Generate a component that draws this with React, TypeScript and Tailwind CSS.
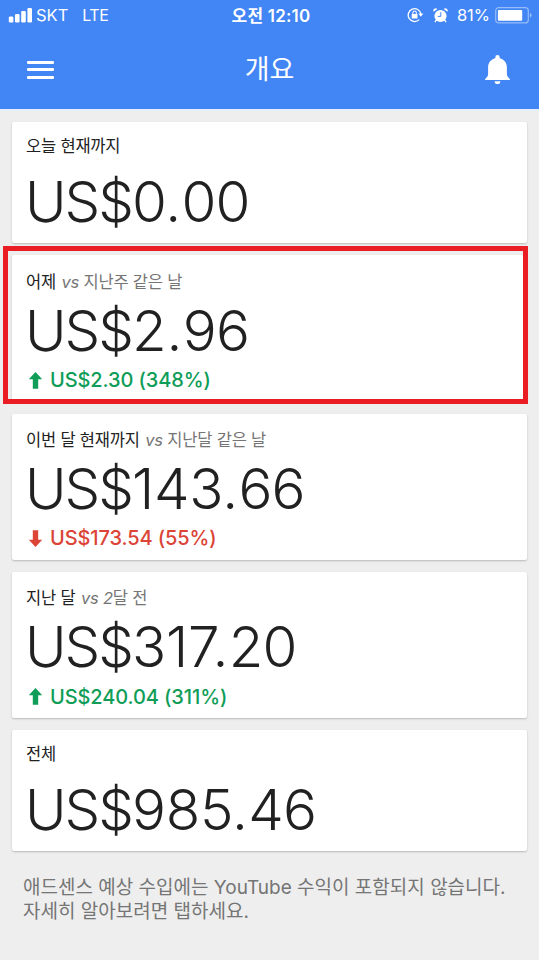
import React from 'react';
import { clsx } from 'clsx';

interface Earning {
  id: string;
  label: string;
  compare?: React.ReactNode;
  whole: string;
  cents: string;
  delta?: { direction: 'up' | 'down'; text: string };
  highlighted?: boolean;
}

const EARNINGS: Earning[] = [
  { id: 'today', label: '오늘 현재까지', whole: '0', cents: '00' },
  {
    id: 'yesterday',
    label: '어제',
    compare: '지난주 같은 날',
    whole: '2',
    cents: '96',
    delta: { direction: 'up', text: 'US$2.30 (348%)' },
    highlighted: true,
  },
  {
    id: 'month',
    label: '이번 달 현재까지',
    compare: '지난달 같은 날',
    whole: '143',
    cents: '66',
    delta: { direction: 'down', text: 'US$173.54 (55%)' },
  },
  {
    id: 'last-month',
    label: '지난 달',
    compare: (
      <>
        <i>2</i>달 전
      </>
    ),
    whole: '317',
    cents: '20',
    delta: { direction: 'up', text: 'US$240.04 (311%)' },
  },
  { id: 'total', label: '전체', whole: '985', cents: '46' },
];

const SignalBars = () => (
  <svg className="h-[15px] w-6" viewBox="0 0 24 15" fill="currentColor">
    <rect x="0.8" y="8.5" width="4.6" height="6" rx="1.3" />
    <rect x="7" y="6" width="4.6" height="8.5" rx="1.3" />
    <rect x="13.2" y="3" width="4.6" height="11.5" rx="1.3" />
    <rect x="19.4" y="0" width="4.6" height="14.5" rx="1.3" />
  </svg>
);

const RotationLock = () => (
  <svg className="h-4 w-[17px]" viewBox="0 0 17 16" fill="none" stroke="currentColor" strokeWidth="1.3">
    <path d="M12.2 12.6A6.4 6.4 0 1 1 13.9 7" />
    <path d="M11.3 6.6h5l-2.5 3.2z" fill="currentColor" stroke="none" />
    <rect x="4.7" y="7" width="5.8" height="4.6" rx="0.5" fill="currentColor" stroke="none" />
    <path d="M5.9 7.4V5.7a1.7 1.7 0 0 1 3.4 0v1.7" strokeWidth="1.1" />
  </svg>
);

const AlarmClock = () => (
  <svg className="h-[15px] w-[15px]" viewBox="0 0 15 15" fill="currentColor">
    <circle cx="7.5" cy="8" r="6.1" />
    <path d="M0.6 3.8A2.4 2.4 0 0 1 4.3 0.9zM14.4 3.8A2.4 2.4 0 0 0 10.7 0.9z" />
    <path d="M3.2 12.2l-1 1.5M11.8 12.2l1 1.5" stroke="currentColor" strokeWidth="1.3" strokeLinecap="round" />
    <path d="M7.8 4.2v4.2H4.8" fill="none" stroke="#4285f4" strokeWidth="1" />
  </svg>
);

const Battery = () => (
  <svg className="h-[17px] w-[37px]" viewBox="0 0 37 17">
    <rect x="0.7" y="0.7" width="32.6" height="15.2" rx="3" fill="none" stroke="#fff" strokeOpacity="0.45" strokeWidth="1.2" />
    <rect x="2.9" y="2.9" width="24.3" height="10.8" rx="1" fill="#fff" />
    <path d="M35 6v4.6q1.500-.6 1.500-2.300T35 6z" fill="#fff" fillOpacity="0.5" />
  </svg>
);

const Bell = () => (
  <svg className="h-[29px] w-[25px]" viewBox="0 0 25 29" fill="currentColor">
    <path d="M12.5 0a2.2 2.2 0 0 0-2.2 2.2v1C5.8 4.2 3.1 8 3.1 12.3v6.8c0 2-1 3.3-3 4.9v.9h24.8V24c-2-1.6-3-2.9-3-4.9v-6.8c0-4.3-2.7-8.1-7.2-9.1v-1A2.2 2.2 0 0 0 12.5 0z" />
    <path d="M9.6 26.2a2.9 2.9 0 0 0 5.8 0z" />
  </svg>
);

const Arrow: React.FC<{ direction: 'up' | 'down' }> = ({ direction }) => (
  <svg
    className={clsx('mr-[7px] ml-0.5 h-[17px] w-[15px]', direction === 'down' && 'rotate-180')}
    viewBox="0 0 15 17"
    fill="currentColor"
  >
    <path d="M7.5 0L14.2 7.2H10.2V16.7H4.8V7.2H.8z" />
  </svg>
);

const EarningCard: React.FC<{ item: Earning }> = ({ item }) => (
  <section
    className={clsx(
      'relative rounded-[2px] bg-white px-[14px] shadow-[0_1px_2px_rgba(0,0,0,0.22)]',
      item.delta ? 'h-[146px] pt-[16.75px]' : 'h-[121px] pt-[14.5px]'
    )}
  >
    <h2 className="flex h-5 items-center text-[16.5px] tracking-[-0.2px] text-[#212121]">
      {item.label}
      {item.compare && (
        <span className="ml-[5.5px] whitespace-pre text-[#757575]">
          <i>vs </i>
          {item.compare}
        </span>
      )}
    </h2>
    <p
      className={clsx(
        "-ml-px flex h-[60px] items-center font-['Inter'] text-[56.5px] leading-none font-light text-[#212121]",
        item.delta ? 'mt-[9px]' : 'mt-[15.5px]'
      )}
    >
      <span className="tracking-[-2px]">US$</span>
      <span className="tracking-[-0.2px]">{item.whole}.</span>
      <span className="ml-[0.5px] tracking-[-0.8px]">{item.cents}</span>
    </p>
    {item.delta && (
      <p
        className={clsx(
          "mt-[9px] flex h-5 items-center font-['Inter'] text-[20px] font-medium tracking-[-0.1px]",
          item.delta.direction === 'up' ? 'text-[#0f9d58]' : 'text-[#db4437]'
        )}
      >
        <Arrow direction={item.delta.direction} />
        {item.delta.text}
      </p>
    )}
    {item.highlighted && <div className="absolute -top-[9px] -right-px -bottom-[3px] -left-[9px] z-10 border-[5px] border-[#ea1c24]" />}
  </section>
);

export default function App() {
  return (
    <div className="h-[960px] w-[539px] overflow-hidden bg-[#eeeeee] font-['Inter','Noto_Sans_CJK_KR',sans-serif]">
      <header className="h-[111px] border-b-2 border-[#e4f0f8] bg-[#4285f4] text-white">
        <div className="grid h-[30px] grid-cols-3 items-center pr-[7px] pl-2 text-[16px]">
          <div className="flex items-center">
            <SignalBars />
            <span className="ml-1 text-[16.5px]">SKT</span>
            <span className="ml-[14px] tracking-[-0.5px]">LTE</span>
          </div>
          <div className="pt-[3px] pl-0.5 text-center text-[17px] font-semibold tracking-[0.2px]">오전 12:10</div>
          <div className="flex items-center justify-end">
            <RotationLock />
            <span className="ml-[9px]">
              <AlarmClock />
            </span>
            <span className="ml-[9px] text-[16.5px]">81%</span>
            <span className="ml-[5px]">
              <Battery />
            </span>
          </div>
        </div>
        <div className="flex h-[79px] items-center justify-between pr-[29px] pl-[27px]">
          <div className="flex w-[27px] flex-col gap-[4.5px]">
            <span className="h-[3px] rounded-[1px] bg-white" />
            <span className="h-[3px] rounded-[1px] bg-white" />
            <span className="h-[3px] rounded-[1px] bg-white" />
          </div>
          <h1 className="pt-0.5 text-[27px]">개요</h1>
          <Bell />
        </div>
      </header>
      <main className="flex flex-col gap-[12.25px] px-3 pt-[11px]">
        {EARNINGS.map((item) => (
          <EarningCard key={item.id} item={item} />
        ))}
        <p className="mt-[13px] px-[11px] text-[19px] leading-6 whitespace-nowrap text-[#757575]">
          애드센스 예상 수입에는 YouTube 수익이 포함되지 않습니다.
          <br />
          자세히 알아보려면 탭하세요.
        </p>
      </main>
    </div>
  );
}
